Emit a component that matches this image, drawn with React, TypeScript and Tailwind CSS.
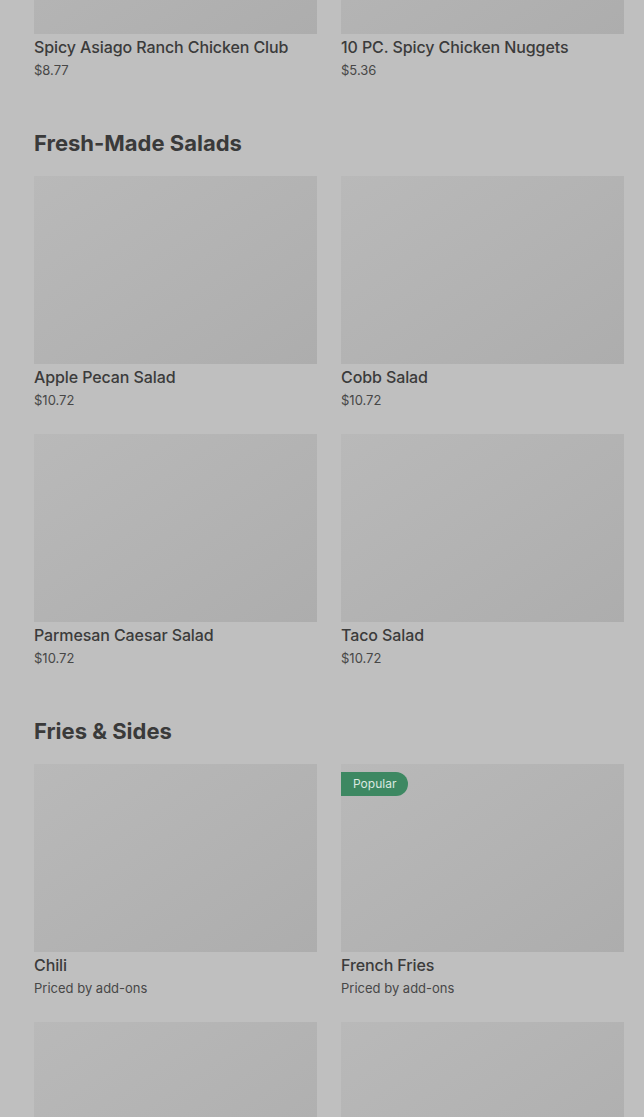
import clsx from 'clsx'

type Item = { name?: string; price?: string; popular?: boolean }

const sections: { title?: string; items: Item[] }[] = [
  {
    items: [
      { name: 'Spicy Asiago Ranch Chicken Club', price: '$8.77' },
      { name: '10 PC. Spicy Chicken Nuggets', price: '$5.36' },
    ],
  },
  {
    title: 'Fresh-Made Salads',
    items: [
      { name: 'Apple Pecan Salad', price: '$10.72' },
      { name: 'Cobb Salad', price: '$10.72' },
      { name: 'Parmesan Caesar Salad', price: '$10.72' },
      { name: 'Taco Salad', price: '$10.72' },
    ],
  },
  {
    title: 'Fries & Sides',
    items: [
      { name: 'Chili', price: 'Priced by add-ons' },
      { name: 'French Fries', price: 'Priced by add-ons', popular: true },
      {},
      {},
    ],
  },
]

function MenuCard({ item }: { item: Item }) {
  return (
    <div className="flex flex-col">
      <div className="relative h-[188px] bg-gradient-to-br from-[#b9b9b9] via-[#b3b3b3] to-[#adadad]">
        {item.popular && (
          <span className="absolute left-0 top-2 flex h-6 items-center rounded-r-full bg-[#3d8862] px-3 text-[12px] text-[#dbe8e0]">
            Popular
          </span>
        )}
      </div>
      {item.name && (
        <>
          <p className="mt-[3px] truncate text-[16px] font-medium leading-5 tracking-[-0.1px] text-[#3b3b3b]">
            {item.name}
          </p>
          <p className="mt-1 text-[13px] leading-[18px] text-[#474747]">{item.price}</p>
        </>
      )}
    </div>
  )
}

export default function App() {
  return (
    <div
      className="h-[1117px] overflow-hidden bg-[#bfbfbf] pl-[34px] pr-5"
      style={{ fontFamily: 'Inter, "Noto Sans", sans-serif' }}
    >
      <div className="-mt-[154px] flex flex-col gap-[50px]">
        {sections.map((section, idx) => (
          <div key={idx} className="flex flex-col">
            {section.title && (
              <h2 className="mb-[19px] text-[22px] font-bold leading-7 text-[#3a3a3a]">
                {section.title}
              </h2>
            )}
            <div className={clsx('grid grid-cols-2 gap-x-6 gap-y-[25px]')}>
              {section.items.map((item, i) => (
                <MenuCard key={i} item={item} />
              ))}
            </div>
          </div>
        ))}
      </div>
    </div>
  )
}
